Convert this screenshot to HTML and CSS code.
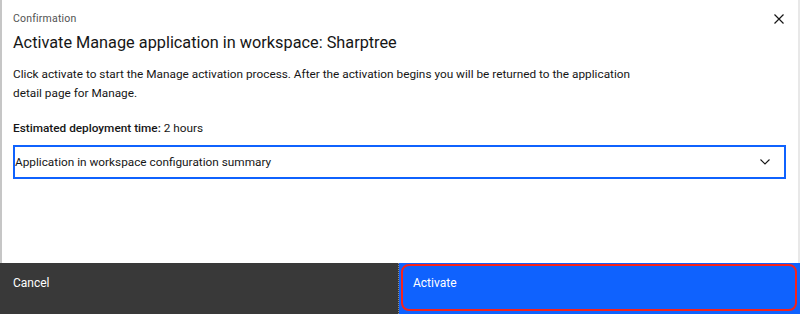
FILE: index.html
```html
<!DOCTYPE html>
<html lang="en">
<head>
  <meta charset="UTF-8" />
  <title>Confirmation</title>
  <link rel="stylesheet" href="styles.css">
</head>
<body>
  <div class="modal">
    <div class="modal-body">
      <div class="modal-header">
        <div class="modal-label">Confirmation</div>
        <h2 class="modal-title">Activate Manage application in workspace: Sharptree</h2>
        <button class="modal-close" aria-label="Close">
          <svg width="10" height="10" viewBox="0 0 10 10"><path d="M0.5 0.5 L9.5 9.5 M9.5 0.5 L0.5 9.5" stroke="#161616" stroke-width="1.2" fill="none"/></svg>
        </button>
      </div>

      <div class="modal-content">
        <p class="modal-text">Click activate to start the Manage activation process. After the activation begins you will be returned to the application detail page for Manage.</p>
        <p class="modal-time"><strong>Estimated deployment time:</strong> 2 hours</p>
        <div class="accordion">
          <span>Application in workspace configuration summary</span>
          <svg width="10" height="6" viewBox="0 0 10 6"><path d="M0.5 0.5 L5 5 L9.5 0.5" stroke="#161616" stroke-width="1.1" fill="none"/></svg>
        </div>
      </div>
    </div>

    <div class="modal-footer">
      <button class="btn btn-secondary">Cancel</button>
      <button class="btn btn-primary">Activate</button>
    </div>
  </div>
</body>
</html>
```

FILE: styles.css
```css
body {
  margin: 0;
  font-family: Roboto, sans-serif;
  color: #161616;
  background: #fff;
}

.modal {
  height: 314px;
  display: flex;
  flex-direction: column;
}

.modal-body {
  flex: 1;
  border-left: 2px solid #c6c6c6;
  border-right: 2px solid #e8e8e8;
}

.modal-header {
  position: relative;
  padding: 12px 11px 0 11px;
}

.modal-label {
  font-size: 10.5px;
  line-height: 14px;
  color: #525252;
  letter-spacing: 0.2px;
}

.modal-title {
  margin: 5px 0 0;
  font-size: 16.3px;
  font-weight: 400;
  line-height: 24px;
}

.modal-close {
  position: absolute;
  top: 14px;
  right: 14px;
  border: none;
  background: none;
  padding: 0;
}

.modal-close svg {
  display: block;
}

.modal-content {
  padding: 10px 12px 0 11px;
}

.modal-text {
  margin: 0;
  max-width: 635px;
  font-size: 11.8px;
  line-height: 19px;
}

.modal-time {
  margin: 16px 0 0;
  font-size: 11.8px;
  line-height: 19px;
}

.modal-time strong {
  font-weight: 500;
}

.accordion {
  margin-top: 7px;
  height: 34px;
  box-sizing: border-box;
  border: 2px solid #0f62fe;
  display: flex;
  align-items: center;
  justify-content: space-between;
  padding: 0 14px 0 0;
  font-size: 11.8px;
}

.modal-footer {
  display: grid;
  grid-template-columns: 399px 1fr;
  height: 51px;
}

.btn {
  border: none;
  font-family: inherit;
  font-size: 12px;
  line-height: 14px;
  color: #fff;
  text-align: left;
  padding: 13px 13px 24px;
  cursor: pointer;
}

.btn-secondary {
  background: #393939;
  border-right: 1px dotted #8d8d8d;
}

.btn-primary {
  position: relative;
  background: #0f62fe;
  padding-left: 14px;
}

.btn-primary::after {
  content: "";
  position: absolute;
  top: 1px;
  left: 2px;
  right: 3px;
  bottom: 3px;
  border: 2px solid #f5231b;
  border-radius: 8px;
}
```
